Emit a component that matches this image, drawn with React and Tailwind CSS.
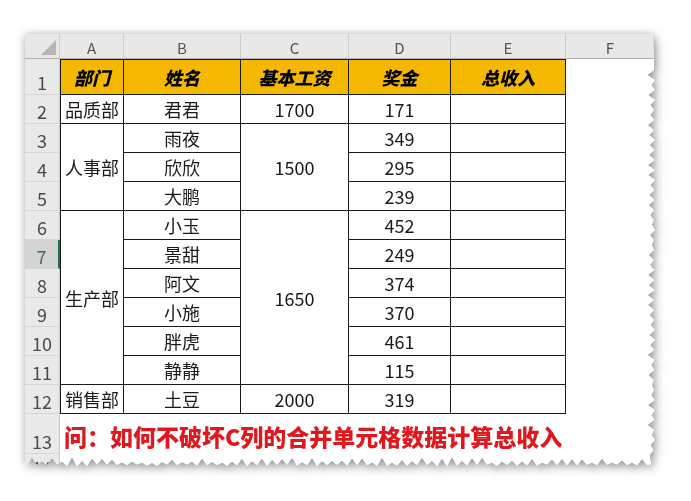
import React from "react";

const W = 630;
const H = 432;

// torn paper edge on the right and bottom, built once from a fixed seed
const tornClip = () => {
  let seed = 11;
  const rnd = () => {
    seed = (seed * 9301 + 49297) % 233280;
    return seed / 233280;
  };
  const pts = ["0px 0px", `${W - 2}px 0px`, `${W - 1}px 30px`];
  let i = 0;
  for (let y = 36; y < H - 8; y += 5) {
    const d = i % 2 === 0 ? rnd() * 1.5 : 3 + rnd() * 5;
    pts.push(`${(W - d).toFixed(1)}px ${y}px`);
    i++;
  }
  pts.push(`${W - 4}px ${H - 2}px`);
  for (let x = W - 8; x > 0; x -= 5) {
    const d = i % 2 === 0 ? rnd() * 1.5 : 3 + rnd() * 6;
    pts.push(`${x}px ${(H - d).toFixed(1)}px`);
    i++;
  }
  pts.push(`0px ${H - 3}px`);
  return `polygon(${pts.join(",")})`;
};

const rows = [
  { n: 2, a: { t: "品质部", span: 1 }, b: "君君", c: { t: "1700", span: 1 }, d: "171" },
  { n: 3, a: { t: "人事部", span: 3 }, b: "雨夜", c: { t: "1500", span: 3 }, d: "349" },
  { n: 4, b: "欣欣", d: "295" },
  { n: 5, b: "大鹏", d: "239" },
  { n: 6, a: { t: "生产部", span: 6 }, b: "小玉", c: { t: "1650", span: 6 }, d: "452" },
  { n: 7, b: "景甜", d: "249" },
  { n: 8, b: "阿文", d: "374" },
  { n: 9, b: "小施", d: "370" },
  { n: 10, b: "胖虎", d: "461" },
  { n: 11, b: "静静", d: "115" },
  { n: 12, a: { t: "销售部", span: 1 }, b: "土豆", c: { t: "2000", span: 1 }, d: "319" },
];

const SPAN = { 1: "", 3: "row-span-3", 6: "row-span-6" };

const ColHead = ({ children }) => (
  <div className="flex items-end justify-center pb-[3px] bg-[#e8e8e8] border-r border-b border-r-[#cdcdcd] border-b-[#b0b0b0] text-[15px] leading-none text-[#555]">
    {children}
  </div>
);

const RowHead = ({ n, active }) => (
  <div
    className={
      "flex items-end justify-center pb-[3px] border-b border-[#d6d6d6] text-[18px] leading-none " +
      (active
        ? "bg-[#d4d4d4] text-[#3d6f55] border-r-2 border-r-[#217346]"
        : "bg-[#e9e9e9] text-[#4a4a4a] border-r border-r-[#c8c8c8]")
    }
  >
    {n}
  </div>
);

const Cell = ({ children, className = "" }) => (
  <div
    className={
      "flex items-center justify-center border-r border-b border-[#1a1a1a] text-[18px] leading-none text-[#1a1a1a] " +
      className
    }
  >
    {children}
  </div>
);

const Head = ({ children, className = "" }) => (
  <Cell className={"bg-[#f5b800] border-t font-black italic text-[17px] text-black " + className}>
    {children}
  </Cell>
);

export default function App() {
  return (
    <div className="w-[691px] h-[501px] bg-white overflow-hidden pt-[34px] pl-[25px] font-['Noto_Sans_CJK_SC','Noto_Sans',sans-serif]">
      <div className="w-[630px] h-[432px] [filter:drop-shadow(0_0_4px_rgba(0,0,0,0.22))_drop-shadow(3px_4px_5px_rgba(0,0,0,0.28))]">
        <div
          className="w-full h-full bg-white grid grid-cols-[35px_64px_117px_108px_102px_115px_1fr] grid-rows-[25px_36px_repeat(11,29px)_40px_1fr]"
          style={{ clipPath: tornClip() }}
        >
          {/* column letters */}
          <div className="relative bg-[#e8e8e8] border-r border-b border-r-[#cdcdcd] border-b-[#b0b0b0]">
            <svg className="absolute right-[3px] bottom-[3px]" width="15" height="15" viewBox="0 0 15 15">
              <polygon points="15,0 15,15 0,15" fill="#b5b5b5" />
            </svg>
          </div>
          {["A", "B", "C", "D", "E", "F"].map((l) => (
            <ColHead key={l}>{l}</ColHead>
          ))}

          {/* row 1 */}
          <RowHead n={1} />
          <Head className="border-l">部门</Head>
          <Head>姓名</Head>
          <Head>基本工资</Head>
          <Head>奖金</Head>
          <Head>总收入</Head>
          <div className="bg-white" />

          {rows.map((r) => (
            <React.Fragment key={r.n}>
              <RowHead n={r.n} active={r.n === 7} />
              {r.a && <Cell className={"border-l " + SPAN[r.a.span]}>{r.a.t}</Cell>}
              <Cell>{r.b}</Cell>
              {r.c && <Cell className={SPAN[r.c.span]}>{r.c.t}</Cell>}
              <Cell>{r.d}</Cell>
              <Cell />
              <div className="bg-white" />
            </React.Fragment>
          ))}

          {/* row 13 */}
          <RowHead n={13} />
          <div className="col-span-6 flex items-center pl-[4px] pt-[4px] text-[23px] font-black leading-none text-[#e0181e]">
            问：如何不破坏C列的合并单元格数据计算总收入
          </div>

          {/* row 14, cut by the torn edge */}
          <div className="flex items-start justify-center overflow-hidden pt-[4px] bg-[#e9e9e9] border-r border-[#c8c8c8] text-[18px] leading-none text-[#4a4a4a]">
            14
          </div>
          <div className="col-span-6 bg-white" />
        </div>
      </div>
    </div>
  );
}
